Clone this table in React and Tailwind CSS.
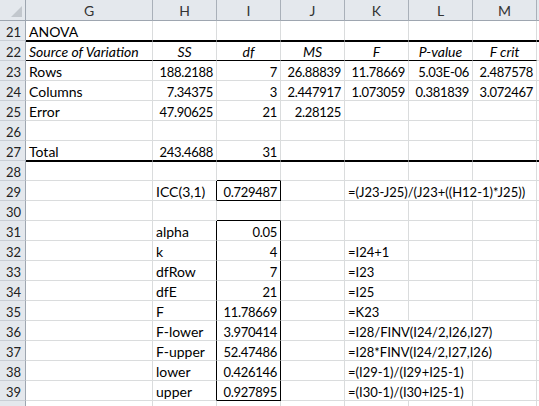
const COLS = ['G', 'H', 'I', 'J', 'K', 'L', 'M', 'N'];

// cells: [colIndex, text, kind, italic, span]
// kind: l = label, f = formula, r = number, c = table heading
const ROWS = {
  21: [[0, 'ANOVA', 'l']],
  22: [
    [0, 'Source of Variation', 'l', true],
    [1, 'SS', 'c', true],
    [2, 'df', 'c', true],
    [3, 'MS', 'c', true],
    [4, 'F', 'c', true],
    [5, 'P-value', 'c', true],
    [6, 'F crit', 'c', true],
  ],
  23: [[0, 'Rows', 'l'], [1, '188.2188'], [2, '7'], [3, '26.88839'], [4, '11.78669'], [5, '5.03E-06'], [6, '2.487578']],
  24: [[0, 'Columns', 'l'], [1, '7.34375'], [2, '3'], [3, '2.447917'], [4, '1.073059'], [5, '0.381839'], [6, '3.072467']],
  25: [[0, 'Error', 'l'], [1, '47.90625'], [2, '21'], [3, '2.28125']],
  26: [],
  27: [[0, 'Total', 'l'], [1, '243.4688'], [2, '31']],
  28: [],
  29: [[1, 'ICC(3,1)', 'l'], [2, '0.729487'], [4, '=(J23-J25)/(J23+((H12-1)*J25))', 'f', false, 3]],
  30: [],
  31: [[1, 'alpha', 'l'], [2, '0.05']],
  32: [[1, 'k', 'l'], [2, '4'], [4, '=I24+1', 'f']],
  33: [[1, 'dfRow', 'l'], [2, '7'], [4, '=I23', 'f']],
  34: [[1, 'dfE', 'l'], [2, '21'], [4, '=I25', 'f']],
  35: [[1, 'F', 'l'], [2, '11.78669'], [4, '=K23', 'f']],
  36: [[1, 'F-lower', 'l'], [2, '3.970414'], [4, '=I28/FINV(I24/2,I26,I27)', 'f', false, 3]],
  37: [[1, 'F-upper', 'l'], [2, '52.47486'], [4, '=I28*FINV(I24/2,I27,I26)', 'f', false, 3]],
  38: [[1, 'lower', 'l'], [2, '0.426146'], [4, '=(I29-1)/(I29+I25-1)', 'f', false, 2]],
  39: [[1, 'upper', 'l'], [2, '0.927895'], [4, '=(I30-1)/(I30+I25-1)', 'f', false, 2]],
  40: [],
};

const blackRight = (r, c) =>
  (r === 29 || (r >= 31 && r <= 39)) && (c === 1 || c === 2);

const blackBottom = (r, c) =>
  r === 21 ||
  r === 27 ||
  (r === 22 && c <= 6) ||
  (c === 2 && (r === 28 || r === 29 || r === 30 || r === 39));

const KIND = {
  l: 'justify-start text-[14px]',
  f: 'justify-start text-[13px]',
  c: 'justify-center text-[14px]',
  r: 'justify-end text-[13px] tracking-[-0.3px]',
};

const Cell = ({ r, c, cell }) => {
  const [, text, kind = 'r', italic, span = 1] = cell || [];
  const last = c + span - 1;
  const thick = r === 22 || r === 28;
  return (
    <div
      className={`h-[20px] flex items-end leading-[16px] px-[3px] whitespace-nowrap overflow-visible border-r border-b ${
        blackRight(r, last) ? 'border-r-black' : 'border-r-[#dadcdd]'
      } ${blackBottom(r, c) ? 'border-b-black' : 'border-b-[#dadcdd]'} ${
        thick ? 'border-t border-t-black' : ''
      } ${KIND[kind]} ${italic ? 'italic' : ''} ${span === 3 ? 'col-span-3' : span === 2 ? 'col-span-2' : ''}`}
    >
      {text}
    </div>
  );
};

const Row = ({ r }) => {
  const cells = ROWS[r];
  const out = [];
  for (let c = 0; c < COLS.length; c++) {
    const cell = cells.find((x) => x[0] === c);
    out.push(<Cell key={c} r={r} c={c} cell={cell} />);
    if (cell && cell[4]) c += cell[4] - 1;
  }
  return (
    <>
      <div className="h-[20px] flex items-end justify-center leading-[16px] pl-[2px] text-[13px] bg-[#e4e8ed] border-r border-b border-r-[#9ea6b0] border-b-[#c9ced5] text-[#222]">
        {r}
      </div>
      {out}
    </>
  );
};

export default function App() {
  return (
    <div className="w-[539px] h-[406px] overflow-hidden bg-white text-black text-[14px] font-['Lato',sans-serif]">
      <div className="grid grid-cols-[26px_127px_64px_64px_64px_64px_64px_64px_64px] w-[603px]">
        <div className="h-[21px] relative bg-[#e4e8ed] border-r border-b border-r-[#9ea6b0] border-b-[#9ea6b0]">
          <svg className="absolute right-[3px] bottom-[3px]" width="11" height="11" viewBox="0 0 11 11">
            <polygon points="11,0 11,11 0,11" fill="#c2c7cd" />
          </svg>
        </div>
        {COLS.map((l) => (
          <div
            key={l}
            className="h-[21px] flex items-center justify-center pt-[1px] bg-[#e4e8ed] border-r border-b border-r-[#a9b0b9] border-b-[#9ea6b0] text-[#333]"
          >
            {l}
          </div>
        ))}
        {Object.keys(ROWS).map((r) => (
          <Row key={r} r={Number(r)} />
        ))}
      </div>
    </div>
  );
}
